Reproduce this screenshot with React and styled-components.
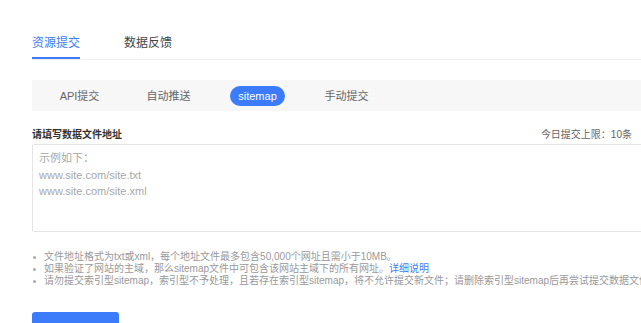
import React from "react";
import styled, { createGlobalStyle } from "styled-components";

const GlobalStyle = createGlobalStyle`
  body {
    margin: 0;
    overflow: hidden;
    background: #fff;
    font-family: "Liberation Sans", "Noto Sans CJK SC", sans-serif;
  }
`;

const BLUE = "#3c7cfb";

const Page = styled.div`
  width: 680px;
  padding: 34px 0 0 32px;
`;

const Tabs = styled.div`
  display: flex;
  gap: 44px;
  border-bottom: 1px solid #efefef;
`;

const Tab = styled.div`
  font-size: 12px;
  line-height: 18px;
  padding-bottom: 5px;
  color: ${(p) => (p.$active ? BLUE : "#444")};
  border-bottom: 2px solid ${(p) => (p.$active ? BLUE : "transparent")};
`;

const Segments = styled.div`
  margin-top: 20px;
  height: 31px;
  background: #f7f7f7;
  display: flex;
  align-items: center;
  gap: 34px;
  padding-left: 20px;
`;

const Segment = styled.div`
  width: 55px;
  height: 20px;
  line-height: 20px;
  border-radius: 10px;
  text-align: center;
  font-size: 11px;
  white-space: nowrap;
  color: ${(p) => (p.$active ? "#fff" : "#666")};
  background: ${(p) => (p.$active ? BLUE : "transparent")};
`;

const LabelRow = styled.div`
  width: 600px;
  margin-top: 17px;
  display: flex;
  justify-content: space-between;
  align-items: center;
  font-size: 10px;
  line-height: 14px;
`;

const Label = styled.span`
  font-weight: bold;
  color: #333;
`;

const Limit = styled.span`
  color: #666;
`;

const Input = styled.textarea`
  display: block;
  box-sizing: border-box;
  margin-top: 2px;
  width: 640px;
  height: 88px;
  padding: 5px 6px;
  border: 1px solid #e4e4e4;
  border-radius: 2px;
  resize: none;
  font-family: inherit;
  font-size: 11px;
  line-height: 16.5px;
  outline: none;
  &::placeholder {
    color: #a8a8a8;
  }
`;

const Notes = styled.ul`
  list-style: none;
  margin: 19px 0 0;
  padding: 0;
`;

const Note = styled.li`
  display: flex;
  align-items: center;
  gap: 8px;
  white-space: nowrap;
  font-size: 10px;
  line-height: 12px;
  color: #999;
`;

const Dot = styled.span`
  width: 3px;
  height: 3px;
  margin-left: 1px;
  border-radius: 50%;
  background: #aaa;
  flex: none;
`;

const Link = styled.a`
  color: ${BLUE};
  text-decoration: none;
`;

const Submit = styled.button`
  margin-top: 25px;
  width: 87px;
  height: 32px;
  border: none;
  border-radius: 3px;
  background: ${BLUE};
  color: #fff;
  font-family: inherit;
  font-size: 12px;
`;

const segments = ["API提交", "自动推送", "sitemap", "手动提交"];

export default function App() {
  return (
    <Page>
      <GlobalStyle />
      <Tabs>
        <Tab $active>资源提交</Tab>
        <Tab>数据反馈</Tab>
      </Tabs>
      <Segments>
        {segments.map((s) => (
          <Segment key={s} $active={s === "sitemap"}>
            {s}
          </Segment>
        ))}
      </Segments>
      <LabelRow>
        <Label>请填写数据文件地址</Label>
        <Limit>今日提交上限：10条</Limit>
      </LabelRow>
      <Input
        placeholder={"示例如下：\nwww.site.com/site.txt\nwww.site.com/site.xml"}
      />
      <Notes>
        <Note>
          <Dot />
          文件地址格式为txt或xml，每个地址文件最多包含50,000个网址且需小于10MB。
        </Note>
        <Note>
          <Dot />
          <span>
            如果验证了网站的主域，那么sitemap文件中可包含该网站主域下的所有网址。
            <Link href="#">详细说明</Link>
          </span>
        </Note>
        <Note>
          <Dot />
          请勿提交索引型sitemap，索引型不予处理，且若存在索引型sitemap，将不允许提交新文件；请删除索引型sitemap后再尝试提交数据文件。
        </Note>
      </Notes>
      <Submit>提交</Submit>
    </Page>
  );
}
